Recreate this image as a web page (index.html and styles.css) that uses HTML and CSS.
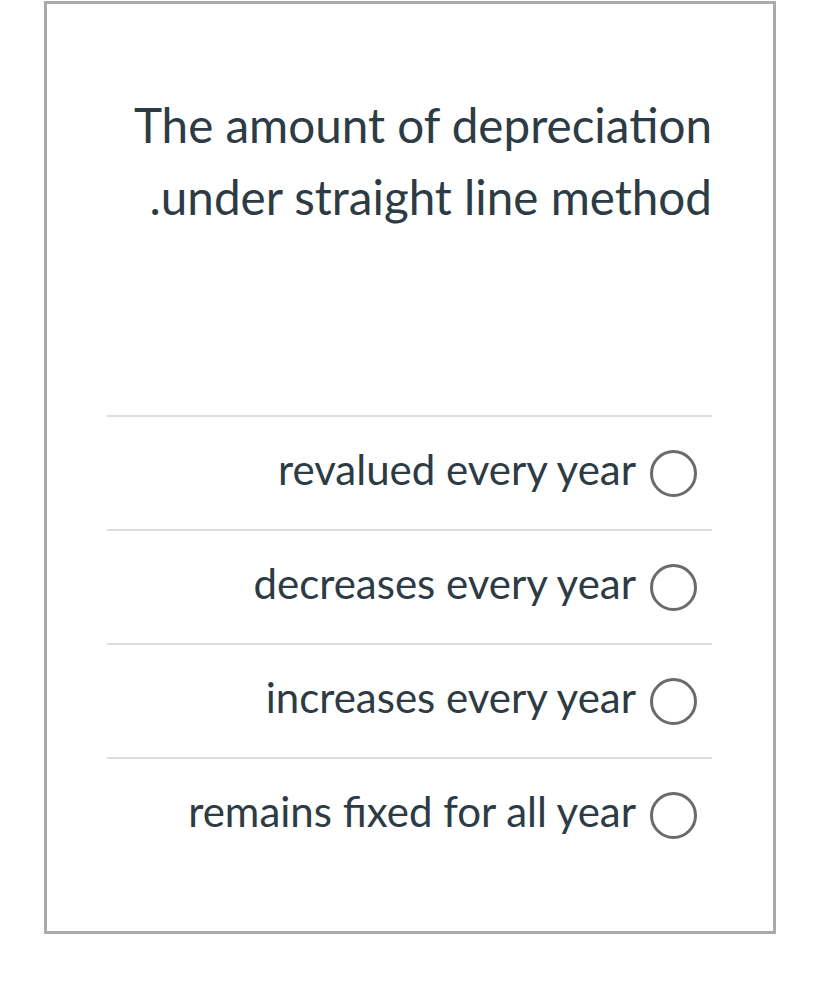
FILE: index.html
```html
<!DOCTYPE html>
<html lang="en">
<head>
<meta charset="utf-8">
<title>Question</title>
<link rel="stylesheet" href="styles.css">
</head>
<body>
<div class="card" dir="rtl">
  <div class="question">The amount of depreciation under straight line method.</div>
  <ul class="answers">
    <li class="answer"><span class="radio"></span><span class="label">revalued every year</span></li>
    <li class="answer"><span class="radio"></span><span class="label">decreases every year</span></li>
    <li class="answer"><span class="radio"></span><span class="label">increases every year</span></li>
    <li class="answer"><span class="radio"></span><span class="label">remains fixed for all year</span></li>
  </ul>
</div>
</body>
</html>
```
FILE: styles.css
```css
html, body {
  margin: 0;
  padding: 0;
  background: #ffffff;
}
body {
  font-family: Lato, "Liberation Sans", sans-serif;
  color: #2d3b45;
}
.card {
  margin: 1px 0 0 44px;
  width: 732px;
  height: 933px;
  box-sizing: border-box;
  border: 3px solid #aaaaaa;
  padding: 0 61px 0 60px;
}
.question {
  box-sizing: border-box;
  height: 411px;
  padding-top: 85px;
  font-size: 47.6px;
  line-height: 72px;
}
.answers {
  list-style: none;
  margin: 0;
  padding: 0;
}
.answer {
  display: flex;
  align-items: center;
  gap: 14px;
  height: 114px;
  box-sizing: border-box;
  border-top: 2px solid #dddddd;
  padding-right: 15px;
  font-size: 42px;
}
.radio {
  flex: none;
  width: 47px;
  height: 47px;
  box-sizing: border-box;
  border: 3px solid #6b6b6b;
  border-radius: 50%;
}
.label {
  white-space: nowrap;
  line-height: 50px;
  margin-bottom: 8px;
}
```
